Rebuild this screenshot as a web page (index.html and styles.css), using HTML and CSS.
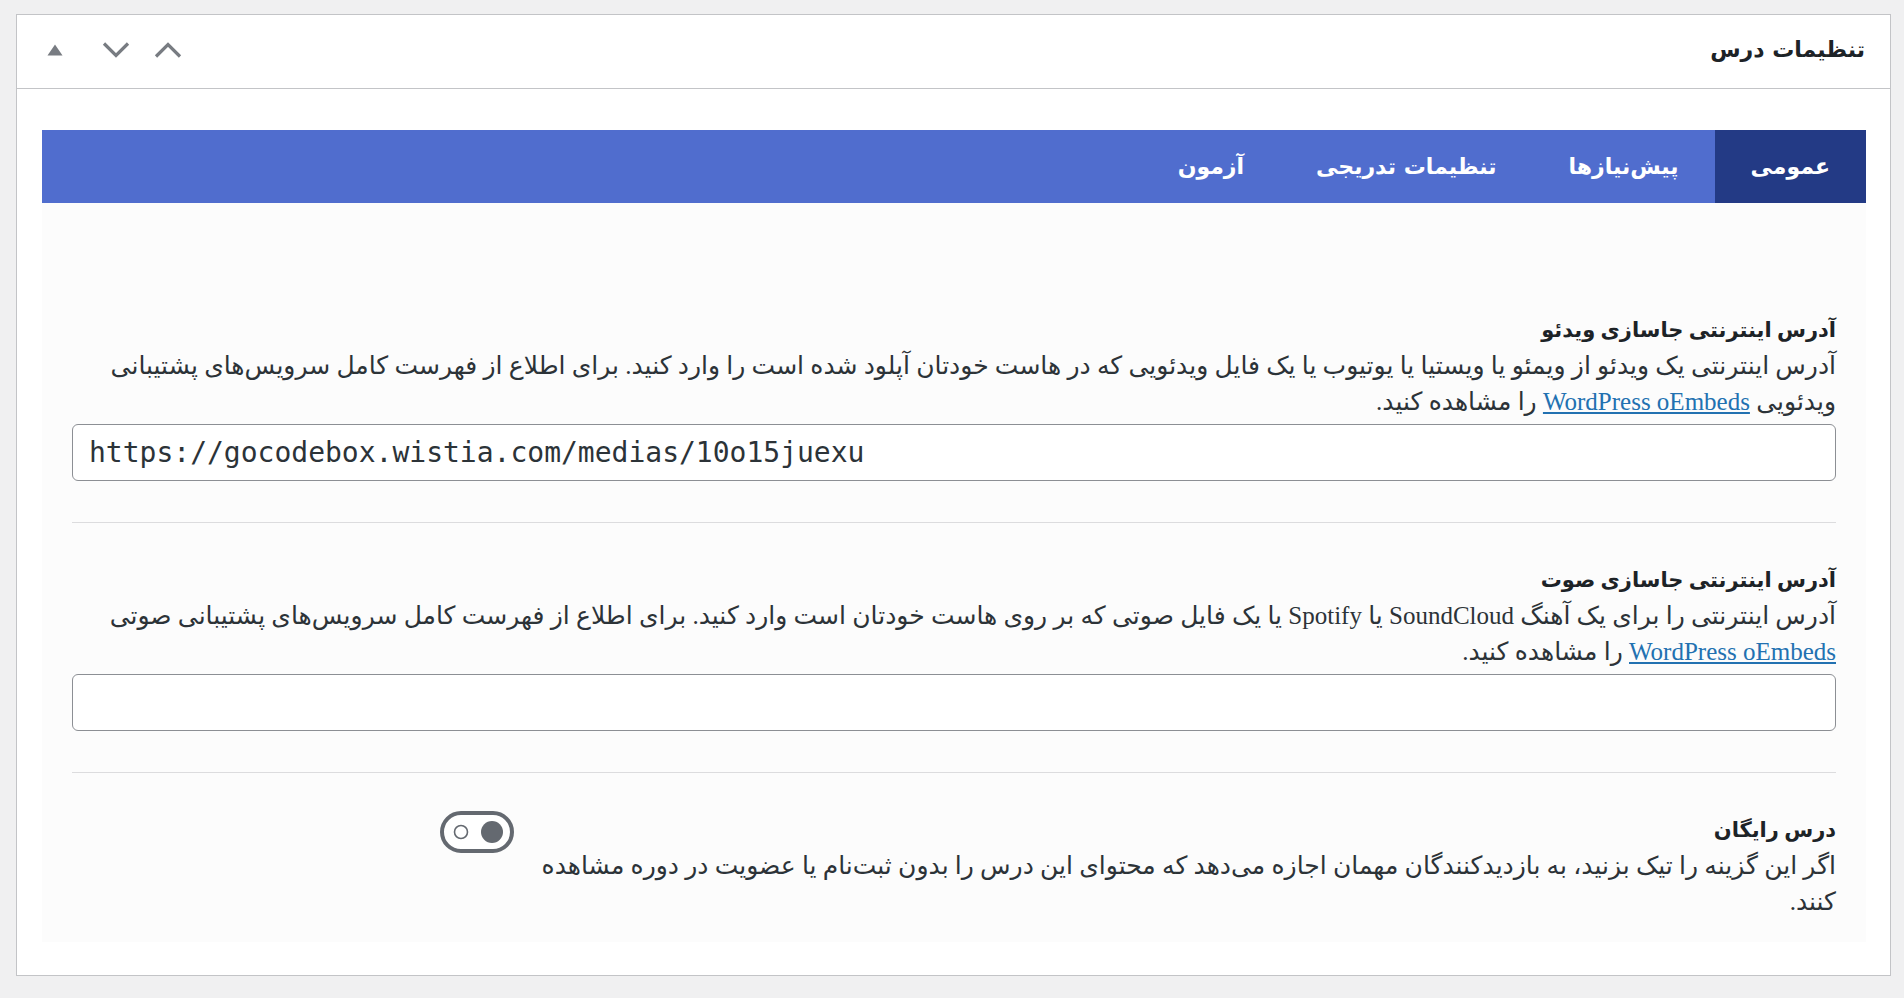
FILE: index.html
```html
<!DOCTYPE html>
<html lang="fa" dir="rtl">
<head>
  <meta charset="UTF-8" />
  <title>تنظیمات درس</title>
  <link rel="stylesheet" href="styles.css">
</head>
<body>

  <div class="postbox">
    <div class="postbox-header">
      <h2>تنظیمات درس</h2>
      <div class="handle-actions">
        <button class="handle-btn toggle-btn" aria-label="باز و بسته کردن">
          <svg width="16" height="12" viewBox="0 0 16 12"><path d="M8 0.5 L15.5 11.5 H0.5 Z" fill="#787c82"/></svg>
        </button>
        <button class="handle-btn down-btn" aria-label="انتقال به پایین">
          <svg width="28" height="18" viewBox="0 0 28 18"><path d="M2 2.5 L14 14.5 L26 2.5" fill="none" stroke="#787c82" stroke-width="3.2"/></svg>
        </button>
        <button class="handle-btn up-btn" aria-label="انتقال به بالا">
          <svg width="28" height="18" viewBox="0 0 28 18"><path d="M2 15.5 L14 3.5 L26 15.5" fill="none" stroke="#787c82" stroke-width="3.2"/></svg>
        </button>
      </div>
    </div>

    <div class="inside">
      <ul class="tabs">
        <li class="active">عمومی</li>
        <li>پیش‌نیازها</li>
        <li>تنظیمات تدریجی</li>
        <li>آزمون</li>
      </ul>

      <div class="panel">
        <div class="field">
          <label class="field-title" for="video-embed">آدرس اینترنتی جاسازی ویدئو</label>
          <p class="field-desc">آدرس اینترنتی یک ویدئو از ویمئو یا ویستیا یا یوتیوب یا یک فایل ویدئویی که در هاست خودتان آپلود شده است را وارد کنید. برای اطلاع از فهرست کامل سرویس‌های پشتیبانی ویدئویی <a href="#">WordPress oEmbeds</a> را مشاهده کنید.</p>
          <input type="text" id="video-embed" class="url-input" dir="ltr" value="https://gocodebox.wistia.com/medias/10o15juexu" />
        </div>

        <div class="field">
          <label class="field-title" for="audio-embed">آدرس اینترنتی جاسازی صوت</label>
          <p class="field-desc">آدرس اینترنتی را برای یک آهنگ SoundCloud یا Spotify یا یک فایل صوتی که بر روی هاست خودتان است وارد کنید. برای اطلاع از فهرست کامل سرویس‌های پشتیبانی صوتی <a href="#">WordPress oEmbeds</a> را مشاهده کنید.</p>
          <input type="text" id="audio-embed" class="url-input" dir="ltr" value="" />
        </div>

        <div class="field field-switch">
          <div class="switch-text">
            <label class="field-title" for="free-lesson">درس رایگان</label>
            <p class="field-desc">اگر این گزینه را تیک بزنید، به بازدیدکنندگان مهمان اجازه می‌دهد که محتوای این درس را بدون ثبت‌نام یا عضویت در دوره مشاهده کنند.</p>
          </div>
          <span class="switch" id="free-lesson">
            <svg width="74" height="42" viewBox="0 0 74 42">
              <rect x="2" y="2" width="70" height="38" rx="19" fill="#fff" stroke="#646970" stroke-width="4"/>
              <circle cx="21" cy="21" r="6.5" fill="none" stroke="#646970" stroke-width="1.6"/>
              <circle cx="52" cy="21" r="11" fill="#646970"/>
            </svg>
          </span>
        </div>
      </div>
    </div>
  </div>

</body>
</html>
```

FILE: styles.css
```css
body {
  margin: 0;
  padding: 14px 13px 22px 16px;
  background-color: #f0f0f1;
  font-family: "Liberation Serif", "DejaVu Sans", serif;
  color: #1d2327;
}
.postbox {
  background-color: #fff;
  border: 1px solid #c3c4c7;
}
.postbox-header {
  display: flex;
  align-items: center;
  justify-content: space-between;
  height: 74px;
  padding: 0 25px 4px 30px;
  box-sizing: border-box;
  border-bottom: 1px solid #c3c4c7;
}
.postbox-header h2 {
  margin: 0;
  font-family: "DejaVu Sans", sans-serif;
  font-size: 22px;
  font-weight: bold;
  color: #1d2327;
}
.handle-actions {
  display: flex;
  direction: ltr;
  align-items: center;
}
.handle-btn {
  display: flex;
  align-items: center;
  justify-content: center;
  padding: 0;
  border: none;
  background: none;
  cursor: pointer;
}
.down-btn {
  margin-left: 39px;
}
.up-btn {
  margin-left: 24px;
}
.inside {
  padding: 41px 24px 33px 25px;
}
.tabs {
  display: flex;
  height: 73px;
  margin: 0;
  padding: 0;
  list-style: none;
  background-color: #506dce;
}
.tabs li {
  display: flex;
  align-items: center;
  padding: 0 36px;
  color: #fff;
  font-family: "DejaVu Sans", sans-serif;
  font-size: 22px;
  font-weight: bold;
  cursor: pointer;
}
.tabs li.active {
  background-color: #233a85;
}
.panel {
  background-color: #fcfcfc;
  padding: 109px 30px 22px 30px;
}
.field {
  padding-bottom: 41px;
  margin-bottom: 39px;
  border-bottom: 1px solid #dcdcde;
}
.field:last-child {
  padding-bottom: 0;
  margin-bottom: 0;
  border-bottom: none;
}
.field-title {
  display: block;
  font-size: 21px;
  font-weight: bold;
  line-height: 36px;
  color: #1d2327;
}
.field-desc {
  margin: 0;
  font-size: 25px;
  line-height: 36px;
  color: #2c3338;
}
.field-desc a {
  color: #2271b1;
}
.url-input {
  display: block;
  width: 100%;
  height: 57px;
  box-sizing: border-box;
  margin-top: 4px;
  padding: 0 16px;
  border: 1px solid #8c8f94;
  border-radius: 6px;
  background-color: #fff;
  font-family: "DejaVu Sans Mono", monospace;
  font-size: 28px;
  color: #2c3338;
}
.field-switch {
  display: flex;
  gap: 22px;
}
.switch-text {
  width: 1300px;
}
.switch {
  display: block;
  height: 42px;
  margin-top: -1px;
  cursor: pointer;
}
```
